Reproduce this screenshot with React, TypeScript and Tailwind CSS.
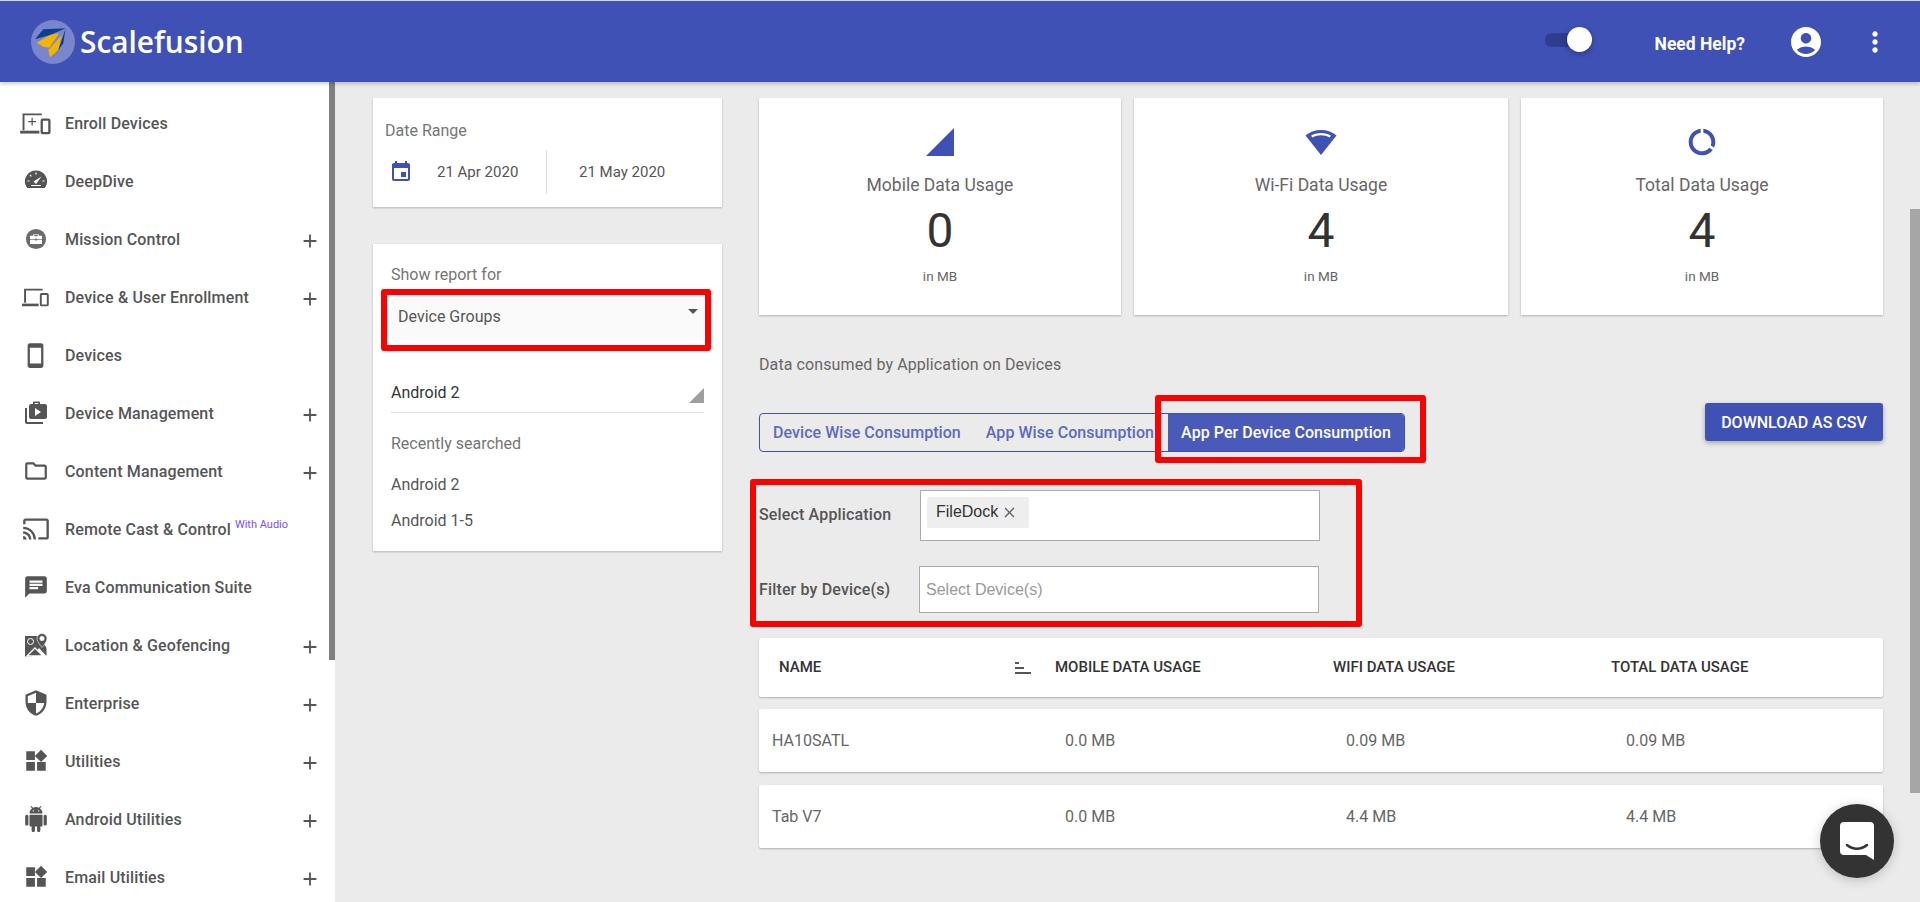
import { MdAccountCircle, MdCast, MdChat, MdClose, MdDataUsage, MdEvent, MdMoreVert, MdOutlineFolder, MdOutlineSmartphone, MdSecurity, MdWidgets, MdAdd } from 'react-icons/md';
import type { ReactNode } from 'react';

const EnrollIcon = () => (
  <svg viewBox="0 0 32 24" className="w-[31px] h-[23px]" fill="none" stroke="#555" strokeWidth="2">
    <path d="M3.500 19V2.500h19" />
    <path d="M0 21h20" strokeWidth="3" />
    <path d="M12.500 6v8M8.500 10h8" strokeWidth="1.300" />
    <rect x="22.500" y="8" width="8" height="14" rx="1" strokeWidth="2.400" />
  </svg>
);

const GaugeIcon = () => (
  <svg viewBox="0 0 24 24" className="w-6 h-6" fill="#555">
    <path d="M12 1.500a11 11 0 0 0-9.500 16.600c.3.5.8.9 1.400.9h16.200c.6 0 1.100-.4 1.400-.9A11 11 0 0 0 12 1.500z" />
    <path d="M9.500 12.500l8-5-5.500 7.500z" fill="#fff" />
    <path d="M3.500 12h2M12 3.500v2M6 6l1.400 1.400M18.500 12h2M7 16.500h10" stroke="#fff" strokeWidth="1.200" />
  </svg>
);

const MissionIcon = () => (
  <svg viewBox="0 0 24 24" className="w-[22px] h-[22px]">
    <circle cx="12" cy="12" r="11" fill="#6b6b6b" />
    <path d="M9 8.500V6.800h6v1.700h3.500V17.500h-13V8.500z" fill="#fff" />
    <path d="M10.400 8.500v-.7h3.200v.7zM5.500 12.600h5.500M13 12.600h5.500" fill="#6b6b6b" stroke="#6b6b6b" strokeWidth=".8" />
    <rect x="11" y="11.600" width="2" height="2" fill="#6b6b6b" />
  </svg>
);

const DevicePhoneIcon = () => (
  <svg viewBox="0 0 32 24" className="w-[28px] h-[21px]" fill="none" stroke="#555" strokeWidth="2.200">
    <path d="M3.500 18V3h20" />
    <path d="M0 20.500h19" strokeWidth="3" />
    <rect x="21.500" y="8" width="8" height="13" rx="1" />
  </svg>
);

const BriefcaseIcon = () => (
  <svg viewBox="0 0 24 24" className="w-6 h-6" fill="#555">
    <path d="M1 7v14c0 1.100.9 2 2 2h16v-2H3V7z" />
    <path d="M9 3V1.500a1 1 0 0 1 1-1h5a1 1 0 0 1 1 1V3h5a2 2 0 0 1 2 2v11a2 2 0 0 1-2 2H7a2 2 0 0 1-2-2V5a2 2 0 0 1 2-2zm1.800 0h3.400V2h-3.400zM11 7v8l6-4z" fillRule="evenodd" />
  </svg>
);

const MapPinIcon = () => (
  <svg viewBox="0 0 24 24" className="w-6 h-6" fill="#555">
    <path d="M1 3h14.500l-1 5 3 6 2-4 3 5v8L15 15l-7 8.500H1z" />
    <path d="M3 23l8-8 8 8z" fill="#555" stroke="#fff" strokeWidth="1.300" />
    <path d="M18 .5a5 5 0 0 0-5 5c0 3.500 5 9 5 9s5-5.500 5-9a5 5 0 0 0-5-5zm0 7.200a2.200 2.200 0 1 1 0-4.400 2.200 2.200 0 0 1 0 4.400z" stroke="#fff" strokeWidth=".6" />
    <circle cx="6.500" cy="8.500" r="3" fill="none" stroke="#fff" strokeWidth="1" />
  </svg>
);

// the full robot, react-icons' MdAndroid is only the head
const AndroidIcon = () => (
  <svg viewBox="0 0 24 24" className="w-[26px] h-[26px]" fill="#555">
    <path d="M6 18c0 .55.45 1 1 1h1v3.500c0 .83.67 1.500 1.500 1.500s1.500-.67 1.500-1.500V19h2v3.500c0 .83.67 1.500 1.500 1.500s1.500-.67 1.500-1.500V19h1c.55 0 1-.45 1-1V8H6v10zM3.500 8C2.670 8 2 8.670 2 9.500v7c0 .83.67 1.500 1.500 1.500S5 17.330 5 16.500v-7C5 8.670 4.330 8 3.500 8zm17 0c-.83 0-1.500.67-1.500 1.500v7c0 .83.67 1.500 1.500 1.500s1.500-.67 1.500-1.500v-7c0-.83-.67-1.500-1.500-1.500zm-4.970-5.840l1.300-1.300c.2-.2.2-.51 0-.71-.2-.2-.51-.2-.71 0l-1.480 1.480C13.850 1.230 12.950 1 12 1c-.96 0-1.860.23-2.660.63L7.850.15c-.2-.2-.51-.2-.71 0-.2.2-.2.51 0 .71l1.310 1.310C6.970 3.260 6 5.010 6 7h12c0-1.990-.97-3.750-2.470-4.840zM10 5H9V4h1v1zm5 0h-1V4h1v1z" />
  </svg>
);

type NavItem = { label: string; icon: ReactNode; expand?: boolean; badge?: string };

const navItems: NavItem[] = [
  { label: 'Enroll Devices', icon: <EnrollIcon /> },
  { label: 'DeepDive', icon: <GaugeIcon /> },
  { label: 'Mission Control', icon: <MissionIcon />, expand: true },
  { label: 'Device & User Enrollment', icon: <DevicePhoneIcon />, expand: true },
  { label: 'Devices', icon: <MdOutlineSmartphone className="w-[27px] h-[27px] text-[#555]" /> },
  { label: 'Device Management', icon: <BriefcaseIcon />, expand: true },
  { label: 'Content Management', icon: <MdOutlineFolder className="w-[26px] h-[26px] text-[#555]" />, expand: true },
  { label: 'Remote Cast & Control', icon: <MdCast className="w-7 h-7 text-[#555]" />, badge: 'With Audio' },
  { label: 'Eva Communication Suite', icon: <MdChat className="w-[26px] h-[26px] text-[#555]" /> },
  { label: 'Location & Geofencing', icon: <MapPinIcon />, expand: true },
  { label: 'Enterprise', icon: <MdSecurity className="w-7 h-7 text-[#555]" />, expand: true },
  { label: 'Utilities', icon: <MdWidgets className="w-[26px] h-[26px] text-[#555]" />, expand: true },
  { label: 'Android Utilities', icon: <AndroidIcon />, expand: true },
  { label: 'Email Utilities', icon: <MdWidgets className="w-[26px] h-[26px] text-[#555]" />, expand: true },
];

const Sidebar = () => (
  <aside className="w-[335px] shrink-0 flex bg-white h-full">
    <nav className="w-[329px] pt-3">
      {navItems.map((item) => (
        <div key={item.label} className="h-[58px] flex items-center">
          <div className="w-[65px] pl-[18px] pr-3 flex justify-center shrink-0">{item.icon}</div>
          <span className="mt-px text-[16px] font-medium tracking-[0.15px] text-[#555]">{item.label}</span>
          {item.badge && <span className="text-[11px] text-[#7c4dff] ml-1 -mt-2">{item.badge}</span>}
          {item.expand && <MdAdd className="ml-auto mr-2 mt-1 w-[22px] h-[22px] text-[#555]" />}
        </div>
      ))}
    </nav>
    <div className="w-1.5 h-[578px] bg-[#808080]" />
  </aside>
);

const SignalIcon = () => (
  <svg viewBox="0 0 28 28" className="w-7 h-7" fill="#3f51b5">
    <path d="M28 0v28H0z" />
  </svg>
);

const WifiIcon = () => (
  <svg viewBox="0 0 32 26" className="w-8 h-[26px]" fill="#3f51b5">
    <path d="M16 1C10 1 4.500 3 .5 6.500L16 26 31.500 6.500C27.500 3 22 1 16 1z" />
    <path d="M16 4C12 4 8.500 5 6 6.800L7.500 8.500C10 7 13 6.300 16 6.300S22 7 24.500 8.500L26 6.800C23.500 5 20 4 16 4z" fill="#fff" />
  </svg>
);

const stats = [
  { title: 'Mobile Data Usage', value: '0', icon: <SignalIcon />, width: 'w-[362px]' },
  { title: 'Wi-Fi Data Usage', value: '4', icon: <WifiIcon />, width: 'w-[374px]' },
  { title: 'Total Data Usage', value: '4', icon: <MdDataUsage className="w-8 h-8 text-[#3f51b5]" />, width: 'w-[362px]' },
];

const rows = [
  { name: 'HA10SATL', mobile: '0.0 MB', wifi: '0.09 MB', total: '0.09 MB' },
  { name: 'Tab V7', mobile: '0.0 MB', wifi: '4.4 MB', total: '4.4 MB' },
];

const App = () => {
  return (
    <div className="relative w-[1920px] h-[902px] overflow-hidden bg-[#ebebeb] font-['Roboto',sans-serif] flex flex-col">
      <div className="h-px bg-[#d5d8ee]" />
      <header className="h-[81px] shrink-0 bg-[#3f51b5] flex items-center shadow-[0_2px_4px_rgba(0,0,0,0.2)] z-10">
        <svg viewBox="0 0 44 44" className="ml-[31px] w-11 h-11">
          <circle cx="22" cy="22" r="22" fill="#7986cb" />
          <path d="M34.700 8.300L12.300 9.300 4 19.300 19 15z" fill="#0d3f8f" />
          <path d="M5.700 22.700L19 15l9.300-1.700-10 14.400-6-1z" fill="#f5b400" />
          <path d="M17.300 30L30.700 15l-3.400 15-8.300 7.300z" fill="#f5b400" />
          <path d="M34.700 8.300L32.300 23.300 22.300 37.300l5-7.300z" fill="#0d3f8f" />
        </svg>
        <span className="ml-[5px] mt-[2px] font-['Open_Sans',sans-serif] font-semibold text-[29.800px] text-white">Scalefusion</span>
        <div className="ml-auto relative w-[45px] h-[14px] rounded-full bg-[#2f3d8f] -mt-1">
          <div className="absolute -right-[2px] -top-[6px] w-[25px] h-[25px] rounded-full bg-white shadow-[0_2px_6px_rgba(0,0,0,0.3)]" />
        </div>
        <span className="ml-[65px] mt-[5px] font-bold text-[17.500px] text-white">Need Help?</span>
        <MdAccountCircle className="ml-[43px] w-9 h-9 text-white" />
        <MdMoreVert className="ml-[35px] mr-[29px] w-8 h-8 text-white" />
      </header>
      <div className="flex flex-1 min-h-0">
        <Sidebar />
        <main className="flex-1 flex pl-[38px] pt-4">
          <div className="w-[349px] shrink-0 flex flex-col gap-[37px]">
            <section className="h-[109px] bg-white shadow-[0_1px_2px_rgba(0,0,0,0.25)] px-3 pt-[21px]">
              <p className="text-[16px] text-[#757575]">Date Range</p>
              <div className="flex items-center mt-[7px] text-[#555] text-[15px]">
                <MdEvent className="ml-1 w-6 h-6 text-[#3f51b5]" />
                <span className="ml-[24px] w-[109px]">21 Apr 2020</span>
                <div className="w-px h-11 bg-[#ddd]" />
                <span className="ml-[32px]">21 May 2020</span>
              </div>
            </section>
            <section className="h-[307px] bg-white shadow-[0_1px_2px_rgba(0,0,0,0.25)] px-[18px] pt-[19px]">
              <p className="text-[16px] text-[#757575]">Show report for</p>
              <div className="h-[47px] mt-[6px] bg-[#fafafa] flex items-start pl-[7px] pr-[6px] pt-[12px] text-[16px] text-[#555]">
                <span>Device Groups</span>
                <span className="ml-auto mt-[4px] w-0 h-0 border-x-[5px] border-x-transparent border-t-[5px] border-t-[#555]" />
              </div>
              <div className="h-[53px] mt-[20px] border-b border-[#ddd] flex items-end pb-[7px] text-[16px] text-[#333]">
                <span>Android 2</span>
                <span className="ml-auto mb-[2px] w-[15px] h-[15px] bg-[#9e9e9e] [clip-path:polygon(100%_0,100%_100%,0_100%)]" />
              </div>
              <p className="mt-[19px] text-[16px] text-[#757575]">Recently searched</p>
              <p className="mt-[17px] text-[16px] text-[#555]">Android 2</p>
              <p className="mt-[12px] text-[16px] text-[#555]">Android 1-5</p>
            </section>
          </div>
          <div className="ml-[37px] w-[1124px] shrink-0">
            <div className="flex gap-[13px]">
              {stats.map((s) => (
                <div key={s.title} className={`${s.width} h-[217px] bg-white shadow-[0_1px_2px_rgba(0,0,0,0.25)] flex flex-col items-center pt-[30px]`}>
                  <div className="h-7 flex items-center">{s.icon}</div>
                  <p className="mt-[16px] text-[17.500px] leading-[26px] text-[#666]">{s.title}</p>
                  <p className="mt-[5px] text-[48px] leading-[56px] text-[#333]">{s.value}</p>
                  <p className="mt-[7px] text-[13.500px] leading-5 text-[#666]">in MB</p>
                </div>
              ))}
            </div>
            <p className="mt-[38px] text-[16px] tracking-[0.1px] text-[#666]">Data consumed by Application on Devices</p>
            <div className="mt-[36px] flex items-start justify-between">
              <div className="h-[39px] w-[646px] flex border border-[#3f51b5] rounded-[4px] text-[16px] font-medium tracking-[0.05px]">
                <span className="pl-[13px] pr-[25px] leading-[37px] text-[#5c6bc0] whitespace-nowrap">Device Wise Consumption</span>
                <span className="leading-[37px] text-[#5c6bc0] whitespace-nowrap">App Wise Consumption</span>
                <span className="ml-auto w-[236px] text-center leading-[37px] text-white bg-[#4a5ab9] rounded-r-[3px] whitespace-nowrap">App Per Device Consumption</span>
              </div>
              <button className="mt-[-10px] w-[178px] h-[38px] pt-px bg-[#3f51b5] text-white text-[16px] font-medium rounded-[3px] shadow-[0_2px_5px_rgba(0,0,0,0.3)]">DOWNLOAD AS CSV</button>
            </div>
            <div className="mt-[38px] flex items-center">
              <span className="w-[161px] pb-[2px] text-[16px] tracking-[0.15px] font-medium text-[#555]">Select Application</span>
              <div className="w-[400px] h-[51px] bg-white border border-[#aaa] flex items-start pl-[6px] pt-[6px]">
                <span className="h-[31px] w-[102px] bg-[#eeeeee] rounded-[2px] flex items-center pl-[9px] pb-[2px] font-['Liberation_Sans',sans-serif] text-[16px] text-[#333]">
                  FileDock
                  <MdClose className="ml-[3px] mt-[2px] w-[17px] h-[17px] text-[#666]" />
                </span>
              </div>
            </div>
            <div className="mt-[25px] flex items-center">
              <span className="w-[160px] text-[16px] tracking-[0.15px] font-medium text-[#555]">Filter by Device(s)</span>
              <div className="w-[400px] h-[47px] bg-white border border-[#aaa] flex items-center pl-[6px] font-['Liberation_Sans',sans-serif] text-[16px] text-[#999]">Select Device(s)</div>
            </div>
            <div className="mt-[25px] h-[59px] bg-white rounded-[2px] shadow-[0_1px_2px_rgba(0,0,0,0.25)] grid grid-cols-[296px_278px_278px_1fr] items-center text-[15px] font-medium text-[#333]">
              <div className="pl-5 pr-6 flex items-center justify-between">
                NAME
                <svg viewBox="0 0 16 12" className="w-4 h-3" fill="#555">
                  <rect x="0" y="0" width="4" height="2" />
                  <rect x="0" y="5" width="9" height="2" />
                  <rect x="0" y="10" width="16" height="2" />
                </svg>
              </div>
              <div className="whitespace-nowrap">MOBILE DATA USAGE</div>
              <div className="whitespace-nowrap">WIFI DATA USAGE</div>
              <div className="whitespace-nowrap">TOTAL DATA USAGE</div>
            </div>
            <div className="mt-3 flex flex-col gap-[13px]">
              {rows.map((r) => (
                <div key={r.name} className="h-[63px] bg-white rounded-[2px] shadow-[0_1px_2px_rgba(0,0,0,0.25)] grid grid-cols-[306px_281px_280px_1fr] items-center text-[16px] text-[#666]">
                  <div className="pl-[13px]">{r.name}</div>
                  <div>{r.mobile}</div>
                  <div>{r.wifi}</div>
                  <div>{r.total}</div>
                </div>
              ))}
            </div>
          </div>
          <div className="ml-auto w-[10px] shrink-0 self-start mt-[111px] h-[584px] bg-[#a6a6a6]" />
        </main>
      </div>

      {/* highlight boxes drawn over the page */}
      <div className="absolute left-[381px] top-[289px] w-[330px] h-[62px] border-[6px] border-[#ff0000] rounded-[3px]" />
      <div className="absolute left-[1155px] top-[395px] w-[271px] h-[68px] border-[6px] border-[#ff0000] rounded-[3px]" />
      <div className="absolute left-[750px] top-[479px] w-[612px] h-[148px] border-[6px] border-[#ff0000] rounded-[3px]" />

      {/* chat launcher */}
      <div className="absolute left-[1820px] top-[804px] w-[74px] h-[74px] rounded-full bg-[#333333] shadow-[0_2px_12px_rgba(0,0,0,0.2)] flex items-center justify-center">
        <svg viewBox="0 0 36 40" className="w-9 h-10">
          <path d="M5 1h26a4 4 0 0 1 4 4v34l-8-5H5a4 4 0 0 1-4-4V5a4 4 0 0 1 4-4z" fill="#fff" />
          <path d="M8 24c6 5 14 5 20 0" stroke="#333" strokeWidth="2.500" fill="none" strokeLinecap="round" />
        </svg>
      </div>
    </div>
  );
};

export default App;
